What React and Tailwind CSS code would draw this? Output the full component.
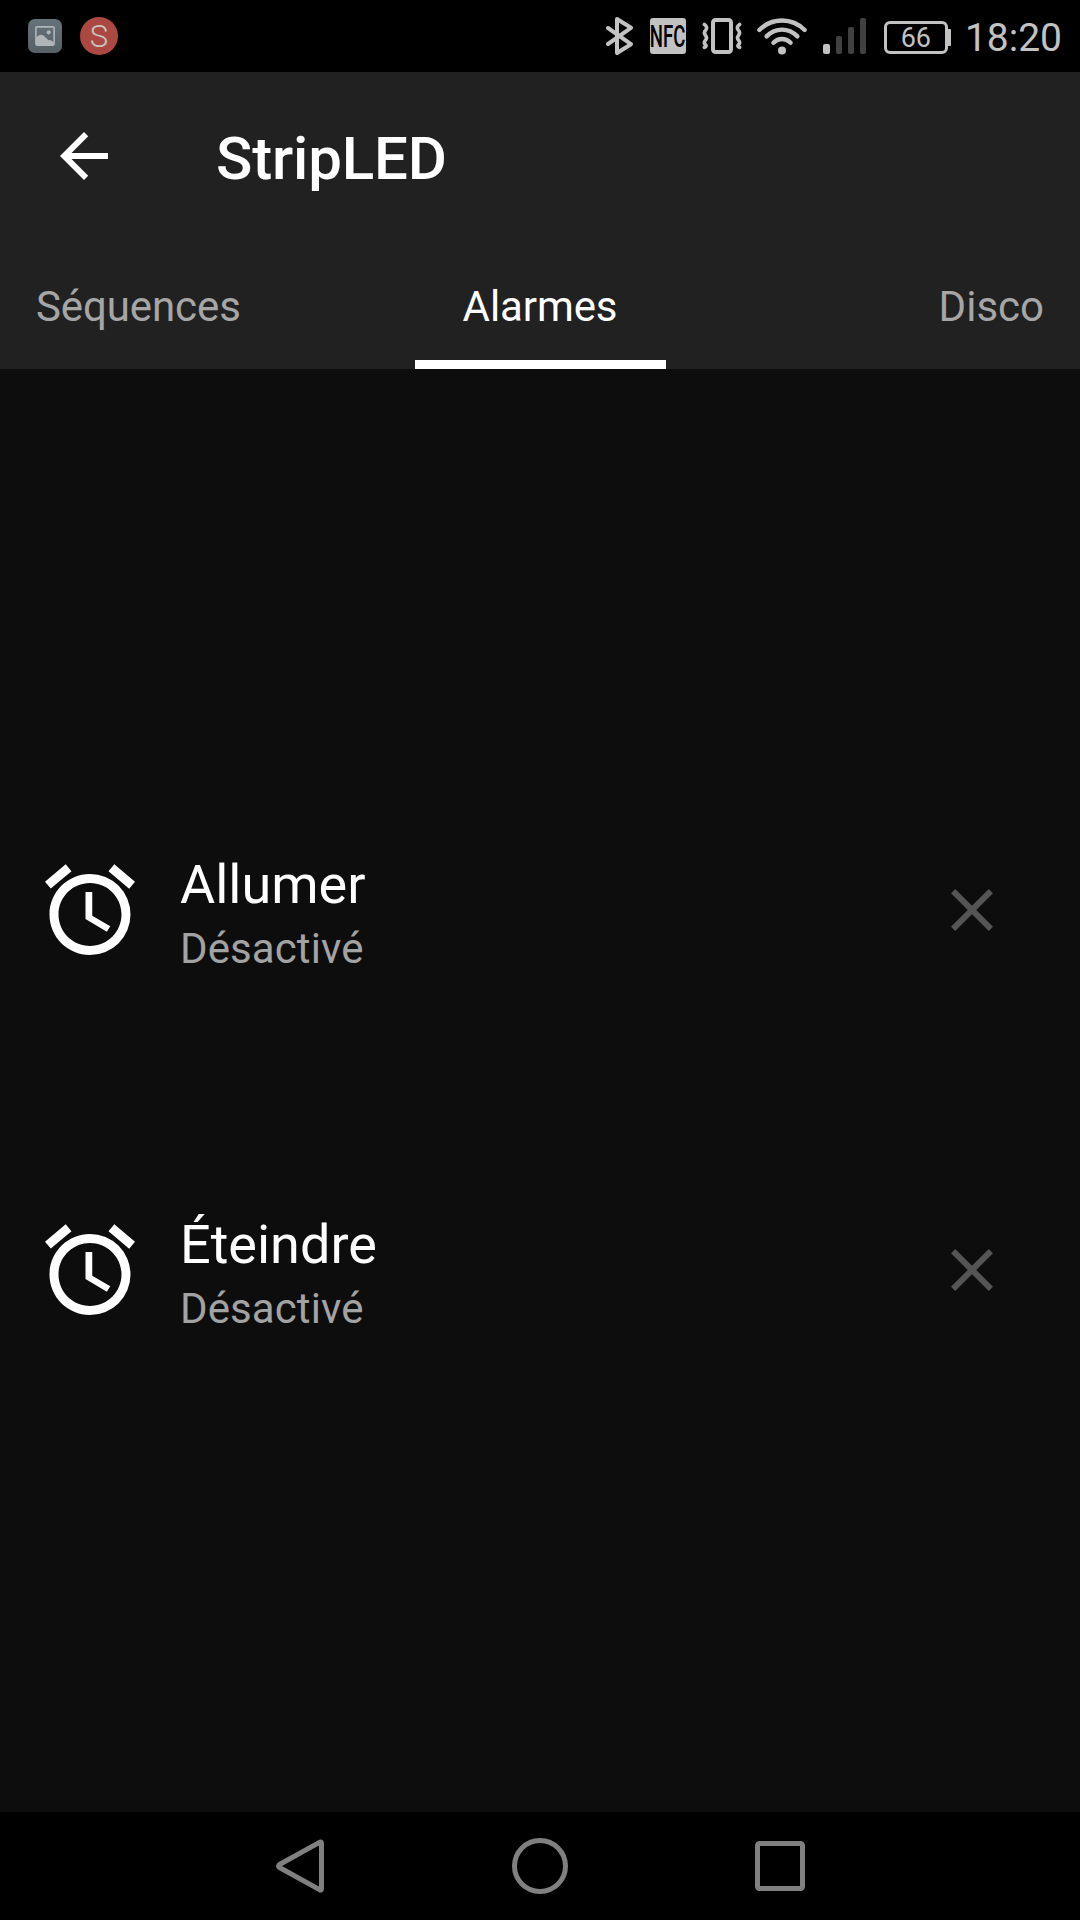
import React, { useState } from "react";
import { MdAlarm, MdArrowBack, MdClose } from "react-icons/md";

const tabs = ["Séquences", "Alarmes", "Disco"];

const alarms = [
  { id: "on", title: "Allumer", status: "Désactivé" },
  { id: "off", title: "Éteindre", status: "Désactivé" },
];

const SignalIcon = () => (
  <svg width="43" height="36" viewBox="0 0 43 36" fill="#404040">
    <rect x="0" y="26" width="7" height="10" rx="2" fill="#c2c2c2" />
    <rect x="13" y="18" width="6" height="18" rx="2" />
    <rect x="25" y="9" width="6" height="27" rx="2" />
    <rect x="37" y="0" width="6" height="36" rx="2" />
  </svg>
);

const WifiIcon = () => (
  <svg
    width="50"
    height="38"
    viewBox="0 0 50 38"
    fill="none"
    stroke="#c2c2c2"
    strokeWidth="4.4"
    strokeLinecap="round"
  >
    <path d="M2.4 13C15 0.4 35 0.4 47.6 13" />
    <path d="M9.6 19.4C18.4 10.4 31.6 10.4 40.4 19.4" />
    <path d="M16.4 25.8C21.4 20.8 28.6 20.8 33.6 25.8" />
    <circle cx="25" cy="33.4" r="4" fill="#c2c2c2" stroke="none" />
  </svg>
);

const VibrateIcon = () => (
  <svg
    width="40"
    height="36"
    viewBox="0 0 40 36"
    fill="none"
    stroke="#c2c2c2"
    strokeWidth="3.6"
    strokeLinecap="round"
    strokeLinejoin="round"
  >
    <rect x="11" y="2" width="18" height="32" rx="2.5" strokeWidth="4" />
    <path d="M2.4 6.5Q6 9 3.8 12Q1.2 14.5 3.6 17.6Q5.6 20 3.2 22.6Q1.2 25.2 3.8 27Q4.8 28.4 2.4 29.4" />
    <path d="M37.6 6.5Q34 9 36.2 12Q38.8 14.5 36.4 17.6Q34.4 20 36.8 22.6Q38.8 25.2 36.2 27Q35.2 28.4 37.6 29.4" />
  </svg>
);

const BluetoothIcon = () => (
  <svg
    width="28"
    height="38"
    viewBox="0 0 28 38"
    fill="none"
    stroke="#c2c2c2"
    strokeWidth="4"
    strokeLinecap="round"
    strokeLinejoin="round"
  >
    <path d="M2 11L25 27.2L11 36V2L25 10.8L2 27" />
  </svg>
);

const StatusBar = () => (
  <div className="flex h-[72px] items-center bg-black pr-[18px] pl-7 text-[#c2c2c2]">
    <div className="flex size-[34px] items-center justify-center rounded-[7px] bg-linear-to-b from-[#66727a] to-[#566067]">
      <svg width="20" height="20" viewBox="0 0 20 20">
        <rect
          x="0.9"
          y="0.9"
          width="18.2"
          height="18.2"
          rx="1"
          fill="none"
          stroke="#b0b5b7"
          strokeWidth="1.6"
        />
        <circle cx="13.7" cy="6.3" r="2.1" fill="#b0b5b7" />
        <path
          d="M1 11.5L3.5 9.5Q6 8 8.5 9.5L13.5 14.3L15.5 14L19 16.5V19H1Z"
          fill="#b0b5b7"
        />
      </svg>
    </div>
    <div className="ml-[18px] flex size-[38px] items-center justify-center rounded-full bg-[#ab4842]">
      <span className="text-[31px] leading-none font-light text-[#c9c4c3]">
        S
      </span>
    </div>
    <div className="ml-auto flex items-center">
      <BluetoothIcon />
      <div className="ml-4 flex h-9 w-9 items-center justify-center rounded-[3px] bg-[#c2c2c2]">
        <span className="scale-x-[0.6] text-[31px] leading-none font-medium text-black">
          NFC
        </span>
      </div>
      <div className="ml-4">
        <VibrateIcon />
      </div>
      <div className="ml-[15px]">
        <WifiIcon />
      </div>
      <div className="ml-4">
        <SignalIcon />
      </div>
      <div className="mt-[3px] ml-[18px] flex items-center">
        <div className="flex h-[33px] w-16 items-center justify-center rounded-[6px] border-3 border-[#c2c2c2] pt-0.5 text-[27px] leading-none">
          66
        </div>
        <div className="h-[17px] w-[3px] rounded-r-[1px] bg-[#c2c2c2]" />
      </div>
      <span className="ml-[14px] pt-1 text-[39px] leading-none">18:20</span>
    </div>
  </div>
);

const AlarmRow = ({ alarm }) => (
  <div className="flex h-[360px] items-center pr-[72px] pl-9">
    <MdAlarm className="size-[108px]" />
    <div className="ml-9 flex-1 pt-2.5">
      <h2 className="text-[54px] leading-[64px]">{alarm.title}</h2>
      <p className="mt-[3px] text-[42px] leading-[57px] tracking-[0.1px] text-[#a3a3a3]">
        {alarm.status}
      </p>
    </div>
    <button>
      <MdClose className="size-[72px] text-[#555555]" />
    </button>
  </div>
);

const NavBar = () => (
  <div className="flex h-[108px] items-center justify-center bg-black">
    <svg
      width="530"
      height="56"
      viewBox="0 0 530 56"
      fill="none"
      stroke="#808080"
      strokeWidth="5"
      strokeLinejoin="round"
    >
      <path d="M44.5 4.4Q46.5 3 46.5 5.5V50.5Q46.5 53 44.5 51.6L4.5 29.5Q2.5 28 4.5 26.5Z" />
      <circle cx="265" cy="28" r="25.5" />
      <rect x="482.5" y="5.5" width="45" height="45" rx="2" />
    </svg>
  </div>
);

const App = () => {
  const [activeTab, setActiveTab] = useState("Alarmes");

  return (
    <div className="flex h-[1920px] w-[1080px] flex-col overflow-hidden bg-[#0d0d0d] font-[Roboto,sans-serif] text-white">
      <StatusBar />
      <header className="h-[297px] bg-[#212121]">
        <div className="flex h-[168px] items-center pl-12">
          <button>
            <MdArrowBack className="size-[72px]" />
          </button>
          <h1 className="ml-24 pt-1.5 text-[60px] leading-[72px] font-medium tracking-[-0.15px]">
            StripLED
          </h1>
        </div>
        <nav className="grid h-[129px] grid-cols-[1fr_251px_1fr] px-9 text-[42px] tracking-[-0.1px]">
          {tabs.map((tab) => (
            <button
              key={tab}
              onClick={() => setActiveTab(tab)}
              className={`border-b-9 pt-[13px] first:text-left last:text-right last:tracking-normal ${
                activeTab === tab
                  ? "border-white text-white"
                  : "border-transparent text-[#a6a6a6]"
              }`}
            >
              {tab}
            </button>
          ))}
        </nav>
      </header>
      <main className="flex-1 pt-[361px]">
        {alarms.map((alarm) => (
          <AlarmRow key={alarm.id} alarm={alarm} />
        ))}
      </main>
      <NavBar />
    </div>
  );
};

export default App;
